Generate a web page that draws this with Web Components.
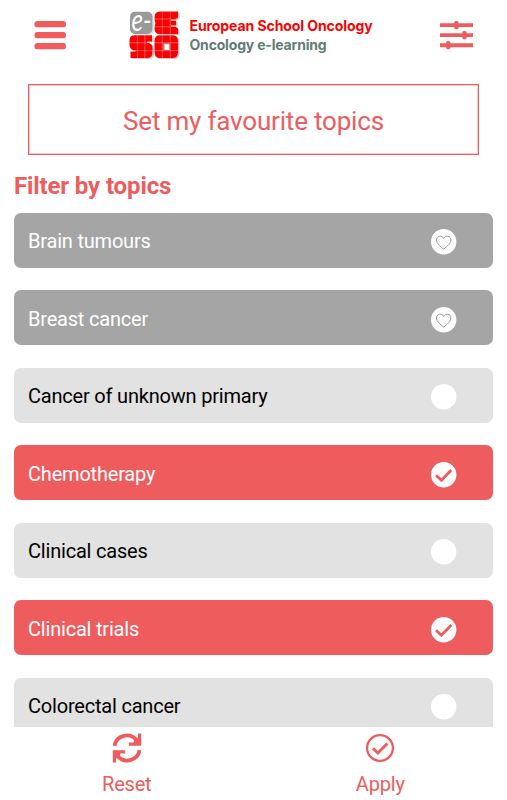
<!DOCTYPE html>
<html lang="en">
<head>
<meta charset="utf-8">
<title>Filter by topics</title>
<style>
    html, body { margin: 0; height: 100%; }
    body {
        --accent: #ee5c5e;
        font-family: Roboto, "Liberation Sans", sans-serif;
        color: #000;
        background: #fff;
        overflow: hidden;
    }
</style>
</head>
<body>
<topic-screen>
    <app-header slot="header"></app-header>
    <outline-button>Set my favourite topics</outline-button>
    <topic-list heading="Filter by topics">
        <topic-item state="favourite">Brain tumours</topic-item>
        <topic-item state="favourite">Breast cancer</topic-item>
        <topic-item>Cancer of unknown primary</topic-item>
        <topic-item state="selected">Chemotherapy</topic-item>
        <topic-item>Clinical cases</topic-item>
        <topic-item state="selected">Clinical trials</topic-item>
        <topic-item>Colorectal cancer</topic-item>
    </topic-list>
    <footer-action slot="footer" icon="reset">Reset</footer-action>
    <footer-action slot="footer" icon="apply">Apply</footer-action>
</topic-screen>

<script>
    // Shared base: renders the view of the component into an open shadow root
    class BaseComponent extends HTMLElement {
        constructor() {
            super();
            this.attachShadow({mode: 'open'});
        }

        connectedCallback() {
            const template = document.createElement('template');
            template.innerHTML = this.view;
            this.shadowRoot.replaceChildren(template.content.cloneNode(true));
        }
    }

    // Page frame with a fixed header and footer and a clipped content area
    class TopicScreen extends BaseComponent {
        get view() {
            return `<style>
                        :host { display: flex; flex-direction: column; height: 800px; width: 507px; }
                        main { flex: 1; min-height: 0; overflow: hidden; }
                        footer { display: grid; grid-template-columns: 1fr 1fr; height: 73px; }
                    </style>
                    <slot name="header"></slot>
                    <main><slot></slot></main>
                    <footer><slot name="footer"></slot></footer>`;
        }
    }

    class AppHeader extends BaseComponent {
        get view() {
            return `<style>
                        :host {
                            display: flex;
                            align-items: center;
                            justify-content: space-between;
                            box-sizing: border-box;
                            height: 70px;
                            padding: 0 33px 0 34px;
                        }
                        svg { display: block; fill: var(--accent); }
                    </style>
                    <svg width="33" height="30" viewBox="0 0 33 30">
                        <rect x="0.5" y="1" width="31.5" height="6.3" rx="2.9"/>
                        <rect x="0.5" y="12" width="31.5" height="6.3" rx="2.9"/>
                        <rect x="0.5" y="23" width="31.5" height="6.3" rx="2.9"/>
                    </svg>
                    <eso-logo></eso-logo>
                    <svg width="34" height="30" viewBox="0 0 34 30">
                        <path d="M0 3.2h33v3.9H0zM0 13.2h33v3.9H0zM0 23.3h33v3.9H0z"/>
                        <rect x="14.3" y="1" width="4.2" height="8.2" rx="1.5"/>
                        <rect x="22.4" y="11" width="4.2" height="8.2" rx="1.5"/>
                        <rect x="6.2" y="21" width="4.2" height="8.2" rx="1.5"/>
                    </svg>`;
        }
    }

    class EsoLogo extends BaseComponent {
        get view() {
            return `<style>
                        :host { display: flex; align-items: center; gap: 8px; width: 250px; }
                        svg { display: block; flex: none; overflow: visible; }
                        div {
                            font: 700 14px/19px Inter, "Liberation Sans", sans-serif;
                            white-space: nowrap;
                            color: #fe0000;
                        }
                        .name { display: block; letter-spacing: -0.08px; }
                        .sub { display: block; color: #647c78; letter-spacing: -0.18px; }
                    </style>
                    <svg width="53" height="50" viewBox="0 0 53 50">
                        <defs>
                            <g id="tiles">
                                <rect x="1" y="1.8" width="22.5" height="22.2" rx="5" fill="#999"/>
                                <path d="M31 1.5H49V7.5L46.5 9.3H42V10.8H47V15.2H42V16.7H46.5L49 18.5V24H31Q25.5 24 25.5 18.5Q25.5 15 26.5 13Q25.5 11 25.5 7.5Q25.5 1.5 31 1.5Z"/>
                                <path d="M6 25.2H23V31.6H18V33H20Q23.5 34.4 23.5 38V42Q23.5 48 18 48H1.5V41.6H6.5V40.2H4Q.5 38.4 .5 35V30.5Q.5 25.2 6 25.2Z"/>
                                <path fill-rule="evenodd" d="M31 25.2H43.5Q49 25.2 49 31V42Q49 48 43.5 48H31Q25.5 48 25.5 42V31Q25.5 25.2 31 25.2ZM34.5 33.4V40H40.5V33.4Z"/>
                            </g>
                        </defs>
                        <use href="#tiles" x="1.5" y="1" opacity=".22"/>
                        <use href="#tiles" fill="#fa0000"/>
                        <path d="M33.3 1.5v46.5M41.3 1.5v46.5M25.5 9H41M25.5 16.8H41M8.4 25.2V48M15.9 25.2V48M.5 32.8H49M.5 40.6H49"
                            fill="none" stroke="#fff" stroke-opacity=".36" stroke-width=".9"/>
                        <text x="2.5" y="21" fill="#fff" font-family="Lato" font-style="italic" font-size="31" textLength="20" lengthAdjust="spacingAndGlyphs">e-</text>
                    </svg>
                    <div>
                        <span class="name">European School Oncology</span>
                        <span class="sub">Oncology e-learning</span>
                    </div>`;
        }
    }

    class OutlineButton extends BaseComponent {
        get view() {
            return `<style>
                        :host {
                            display: flex;
                            align-items: center;
                            justify-content: center;
                            box-sizing: border-box;
                            height: 71px;
                            margin: 14px 28px 0;
                            border: 1px solid var(--accent);
                            outline: 1px solid #ee5c5e55;
                            outline-offset: -2px;
                            color: var(--accent);
                            font-size: 26px;
                            letter-spacing: -0.19px;
                            padding-top: 2px;
                        }
                    </style>
                    <slot></slot>`;
        }
    }

    class TopicList extends BaseComponent {
        get view() {
            return `<style>
                        :host { display: block; padding: 0 14px; }
                        h2 {
                            margin: 17px 0 11.5px;
                            font-size: 24px;
                            line-height: 29px;
                            font-weight: 700;
                            letter-spacing: -0.12px;
                            color: var(--accent);
                        }
                        .items { display: flex; flex-direction: column; gap: 22.5px; }
                    </style>
                    <h2>${this.getAttribute('heading')}</h2>
                    <div class="items"><slot></slot></div>`;
        }
    }

    class TopicItem extends BaseComponent {
        get mark() {
            switch (this.getAttribute('state')) {
                case 'favourite':
                    return '<path d="M13 20.2C9.5 17 5.8 14.5 5.8 10.9C5.8 6.8 11.2 5.8 13 9.5C14.8 5.8 20.2 6.8 20.2 10.9C20.2 14.5 16.5 17 13 20.2Z" fill="none" stroke="#929292" stroke-width="1"/>';
                case 'selected':
                    return '<path d="M5.3 13.2L10.7 18.2L20.6 8.1" fill="none" stroke="#ee5c5e" stroke-width="2.8"/>';
                default:
                    return '';
            }
        }

        get view() {
            return `<style>
                        :host {
                            display: flex;
                            align-items: center;
                            justify-content: space-between;
                            box-sizing: border-box;
                            height: 55px;
                            padding: 2px 36.4px 0 14px;
                            border-radius: 7px;
                            background: #e2e2e2;
                            font-size: 20px;
                            letter-spacing: -0.2px;
                        }
                        :host([state="favourite"]) { background: #a5a5a5; color: #fff; }
                        :host([state="selected"]) { background: var(--accent); color: #fff; }
                        svg { display: block; margin-top: 2px; }
                    </style>
                    <slot></slot>
                    <svg width="26" height="26" viewBox="0 0 26 26">
                        <circle cx="12.7" cy="12.8" r="12.7" fill="#fff"/>
                        <g transform="translate(-.3 0)">${this.mark}</g>
                    </svg>`;
        }
    }

    class FooterAction extends BaseComponent {
        get icon() {
            if (this.getAttribute('icon') === 'reset') {
                return `<path d="M2.4 12.8A12.6 12.6 0 0 1 24.6 7.2M27.6 17.2A12.6 12.6 0 0 1 5.4 22.8" fill="none" stroke="currentColor" stroke-width="3.8"/>
                        <path d="M29.2 .4V12.8H16.8V9.4H21.5L22.5 7L26 4.5V.4ZM.8 29.6V17.2H13.2V20.6H8.5L7.5 23L4 25.5V29.6Z" fill="currentColor"/>`;
            }
            return `<circle cx="15" cy="15" r="12.9" fill="none" stroke="currentColor" stroke-width="2.3"/>
                    <path d="M8 15.3L12.9 20L22.4 10.5" fill="none" stroke="currentColor" stroke-width="3"/>`;
        }

        get view() {
            return `<style>
                        :host {
                            display: flex;
                            flex-direction: column;
                            align-items: center;
                            padding-top: 6px;
                            gap: 9px;
                            color: var(--accent);
                            font-size: 20px;
                            line-height: 24px;
                            letter-spacing: -0.2px;
                        }
                        svg { display: block; }
                    </style>
                    <svg width="30" height="30" viewBox="0 0 30 30">${this.icon}</svg>
                    <span><slot></slot></span>`;
        }
    }

    customElements.define('topic-screen', TopicScreen);
    customElements.define('app-header', AppHeader);
    customElements.define('eso-logo', EsoLogo);
    customElements.define('outline-button', OutlineButton);
    customElements.define('topic-list', TopicList);
    customElements.define('topic-item', TopicItem);
    customElements.define('footer-action', FooterAction);
</script>
</body>
</html>
